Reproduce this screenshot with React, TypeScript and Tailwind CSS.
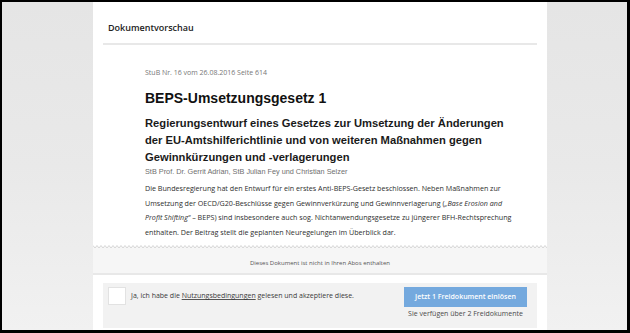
import React from "react"

const openSans = "font-['Open_Sans','Noto_Sans',sans-serif]"
const arial = "font-['Liberation_Sans',Arial,sans-serif]"

// Zackenkante am Ende der Vorschau
function Zigzag() {
  const w = 454
  const step = 2
  const pts: string[] = []
  for (let x = 0, i = 0; x <= w; x += step, i++) {
    pts.push(`${x},${i % 2 === 0 ? 0.5 : 3}`)
  }
  const line = pts.join(" ")
  return (
    <svg width={w} height={4} viewBox={`0 0 ${w} 4`} className="block">
      <polygon points={`${line} ${w},4 0,4`} fill="#f6f6f6" />
      <polyline points={line} fill="none" stroke="#d6d6d6" strokeWidth={1} />
    </svg>
  )
}

export default function App() {
  return (
    <div className="h-[333px] w-[630px] overflow-hidden bg-black pb-[3px] pl-[2px] pr-[3px] pt-[2px]">
      <div className="flex h-full w-full bg-gradient-to-b from-[#e5e5e5] via-[#e9e9e9] to-[#f1f1f1] pl-[91px]">
        <div className="flex h-full w-[454px] flex-col bg-white">
          {/* Kopf */}
          <div className="mx-[10px] h-[43px] border-b-2 border-[#e8e8e8] pl-[5px] pt-[19px]">
            <span className={`${openSans} block text-[9px] font-semibold leading-[14px] text-[#222]`}>
              Dokumentvorschau
            </span>
          </div>

          {/* Dokument */}
          <div className="pl-[52px] pr-[20px]">
            <p className={`${openSans} mt-[22px] text-[7px] leading-[12px] text-[#777]`}>
              StuB Nr. 16 vom 26.08.2016 Seite 614
            </p>
            <h1 className={`${arial} mt-[9px] text-[14px] font-bold leading-[20px] text-[#111]`}>
              BEPS-Umsetzungsgesetz 1
            </h1>
            <h2 className={`${arial} mt-[7px] whitespace-nowrap text-[11.2px] font-bold leading-[17px] text-[#1a1a1a]`}>
              Regierungsentwurf eines Gesetzes zur Umsetzung der Änderungen
              <br />
              der EU-Amtshilferichtlinie und von weiteren Maßnahmen gegen
              <br />
              Gewinnkürzungen und -verlagerungen
            </h2>
            <p className={`${arial} text-[7.3px] leading-[12px] text-[#6f6f6f]`}>
              StB Prof. Dr. Gerrit Adrian, StB Julian Fey und Christian Selzer
            </p>
            <p className={`${openSans} mt-[3px] whitespace-nowrap text-[7.15px] leading-[14.6px] text-[#2e2e2e]`}>
              Die Bundesregierung hat den Entwurf für ein erstes Anti-BEPS-Gesetz beschlossen. Neben Maßnahmen zur
              <br />
              Umsetzung der OECD/G20-Beschlüsse gegen Gewinnverkürzung und Gewinnverlagerung (<i>„Base Erosion and</i>
              <br />
              <i>Profit Shifting“</i> – BEPS) sind insbesondere auch sog. Nichtanwendungsgesetze zu jüngerer BFH-Rechtsprechung
              <br />
              enthalten. Der Beitrag stellt die geplanten Neuregelungen im Überblick dar.
            </p>
          </div>

          {/* Hinweis */}
          <div className="mt-[6px]">
            <Zigzag />
            <div className="flex h-[26px] items-center justify-center border-b-2 border-[#e8e8e8] bg-[#f6f6f6] pt-[4px]">
              <span className={`${openSans} text-[6px] leading-[10px] text-[#555]`}>
                Dieses Dokument ist nicht in Ihren Abos enthalten
              </span>
            </div>
          </div>

          {/* Freidokument einlösen */}
          <div className="pt-[8px]">
            <div className="mx-[10px] flex h-[45px] items-start bg-[#f2f2f2] pl-[5px] pr-[10px] pt-[4px]">
              <label className="flex items-center gap-[5px]">
                <span className="block h-[18px] w-[18px] border border-[#e2e2e2] bg-white" />
                <span className={`${openSans} text-[7px] leading-[12px] text-[#3a3a3a]`}>
                  Ja, ich habe die <span className="underline decoration-[#555]">Nutzungsbedingungen</span> gelesen und
                  akzeptiere diese.
                </span>
              </label>
              <div className="ml-auto flex flex-col items-end">
                <button
                  className={`${openSans} h-[20px] w-[123px] bg-[#74a9de] text-[7px] font-semibold leading-[20px] text-white`}
                >
                  Jetzt 1 Freidokument einlösen
                </button>
                <span className={`${openSans} mr-[4px] mt-[1px] text-[7px] leading-[12px] text-[#4a4a4a]`}>
                  Sie verfügen über 2 Freidokumente
                </span>
              </div>
            </div>
          </div>
        </div>
      </div>
    </div>
  )
}
